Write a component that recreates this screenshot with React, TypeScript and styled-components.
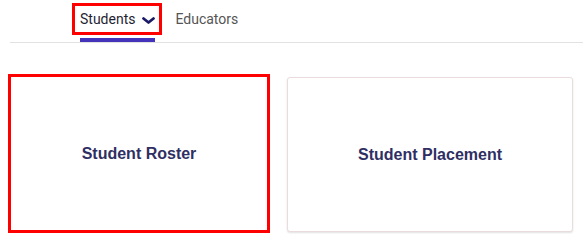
import React from 'react';
import styled, { createGlobalStyle } from 'styled-components';

const cards = [
  { title: 'Student Roster', highlighted: true },
  { title: 'Student Placement', highlighted: false },
];

export default function App() {
  return (
    <>
      <GlobalStyle />
      <Page>
        <NavBar>
          <ActiveTab>
            <TabLabel>
              Students
              <Chevron viewBox='0 0 13 7' aria-hidden='true'>
                <path d='M1.5 1.5 L6.5 5.5 L11.5 1.5' />
              </Chevron>
            </TabLabel>
            <Underline />
          </ActiveTab>
          <Tab>Educators</Tab>
        </NavBar>
        <CardRow>
          {cards.map((card) => (
            <Card key={card.title} $highlighted={card.highlighted}>
              {card.title}
            </Card>
          ))}
        </CardRow>
      </Page>
    </>
  );
}

const GlobalStyle = createGlobalStyle`
  body {
    margin: 0;
    background: #ffffff;
    font-family: Roboto, 'Liberation Sans', sans-serif;
  }
`;

const Page = styled.div`
  width: 583px;
  height: 244px;
  overflow: hidden;
`;

const NavBar = styled.nav`
  display: flex;
  align-items: flex-start;
  height: 42px;
  margin-left: 10px;
  padding-left: 62px;
  border-bottom: 1px solid #e2e2e2;
`;

const ActiveTab = styled.div`
  display: flex;
  flex-direction: column;
  margin-top: 3px;
`;

const TabLabel = styled.div`
  display: flex;
  align-items: center;
  gap: 7px;
  height: 26px;
  padding: 0 4px 0 5px;
  border: 3px solid #ff0000;
  font-size: 14px;
  color: #1f1f33;
`;

const Chevron = styled.svg`
  width: 13px;
  height: 7px;
  margin-top: 2px;
  fill: none;
  stroke: #1a1a66;
  stroke-width: 2.8;
  stroke-linecap: round;
  stroke-linejoin: round;
`;

const Underline = styled.div`
  height: 4px;
  margin: 3px 7px 0 8px;
  background: #4433bb;
`;

const Tab = styled.div`
  display: flex;
  align-items: center;
  height: 32px;
  margin: 3px 0 0 13px;
  font-size: 14px;
  color: #555555;
`;

const CardRow = styled.div`
  display: flex;
  align-items: flex-start;
  gap: 17px;
  margin-top: 31px;
  padding-left: 8px;
`;

const Card = styled.div<{ $highlighted: boolean }>`
  display: flex;
  align-items: center;
  justify-content: center;
  box-sizing: border-box;
  width: ${({ $highlighted }) => ($highlighted ? '262px' : '286px')};
  height: ${({ $highlighted }) => ($highlighted ? '159px' : '155px')};
  margin-top: ${({ $highlighted }) => ($highlighted ? '0' : '3px')};
  border: ${({ $highlighted }) =>
    $highlighted ? '3px solid #ff0000' : '1px solid #eadcdc'};
  border-radius: ${({ $highlighted }) => ($highlighted ? '0' : '3px')};
  box-shadow: ${({ $highlighted }) =>
    $highlighted ? 'none' : '0 1px 2px rgba(0, 0, 0, 0.12)'};
  background: #ffffff;
  font-family: 'Liberation Sans', Arial, sans-serif;
  font-size: 16px;
  font-weight: bold;
  color: #2f2f63;
`;
